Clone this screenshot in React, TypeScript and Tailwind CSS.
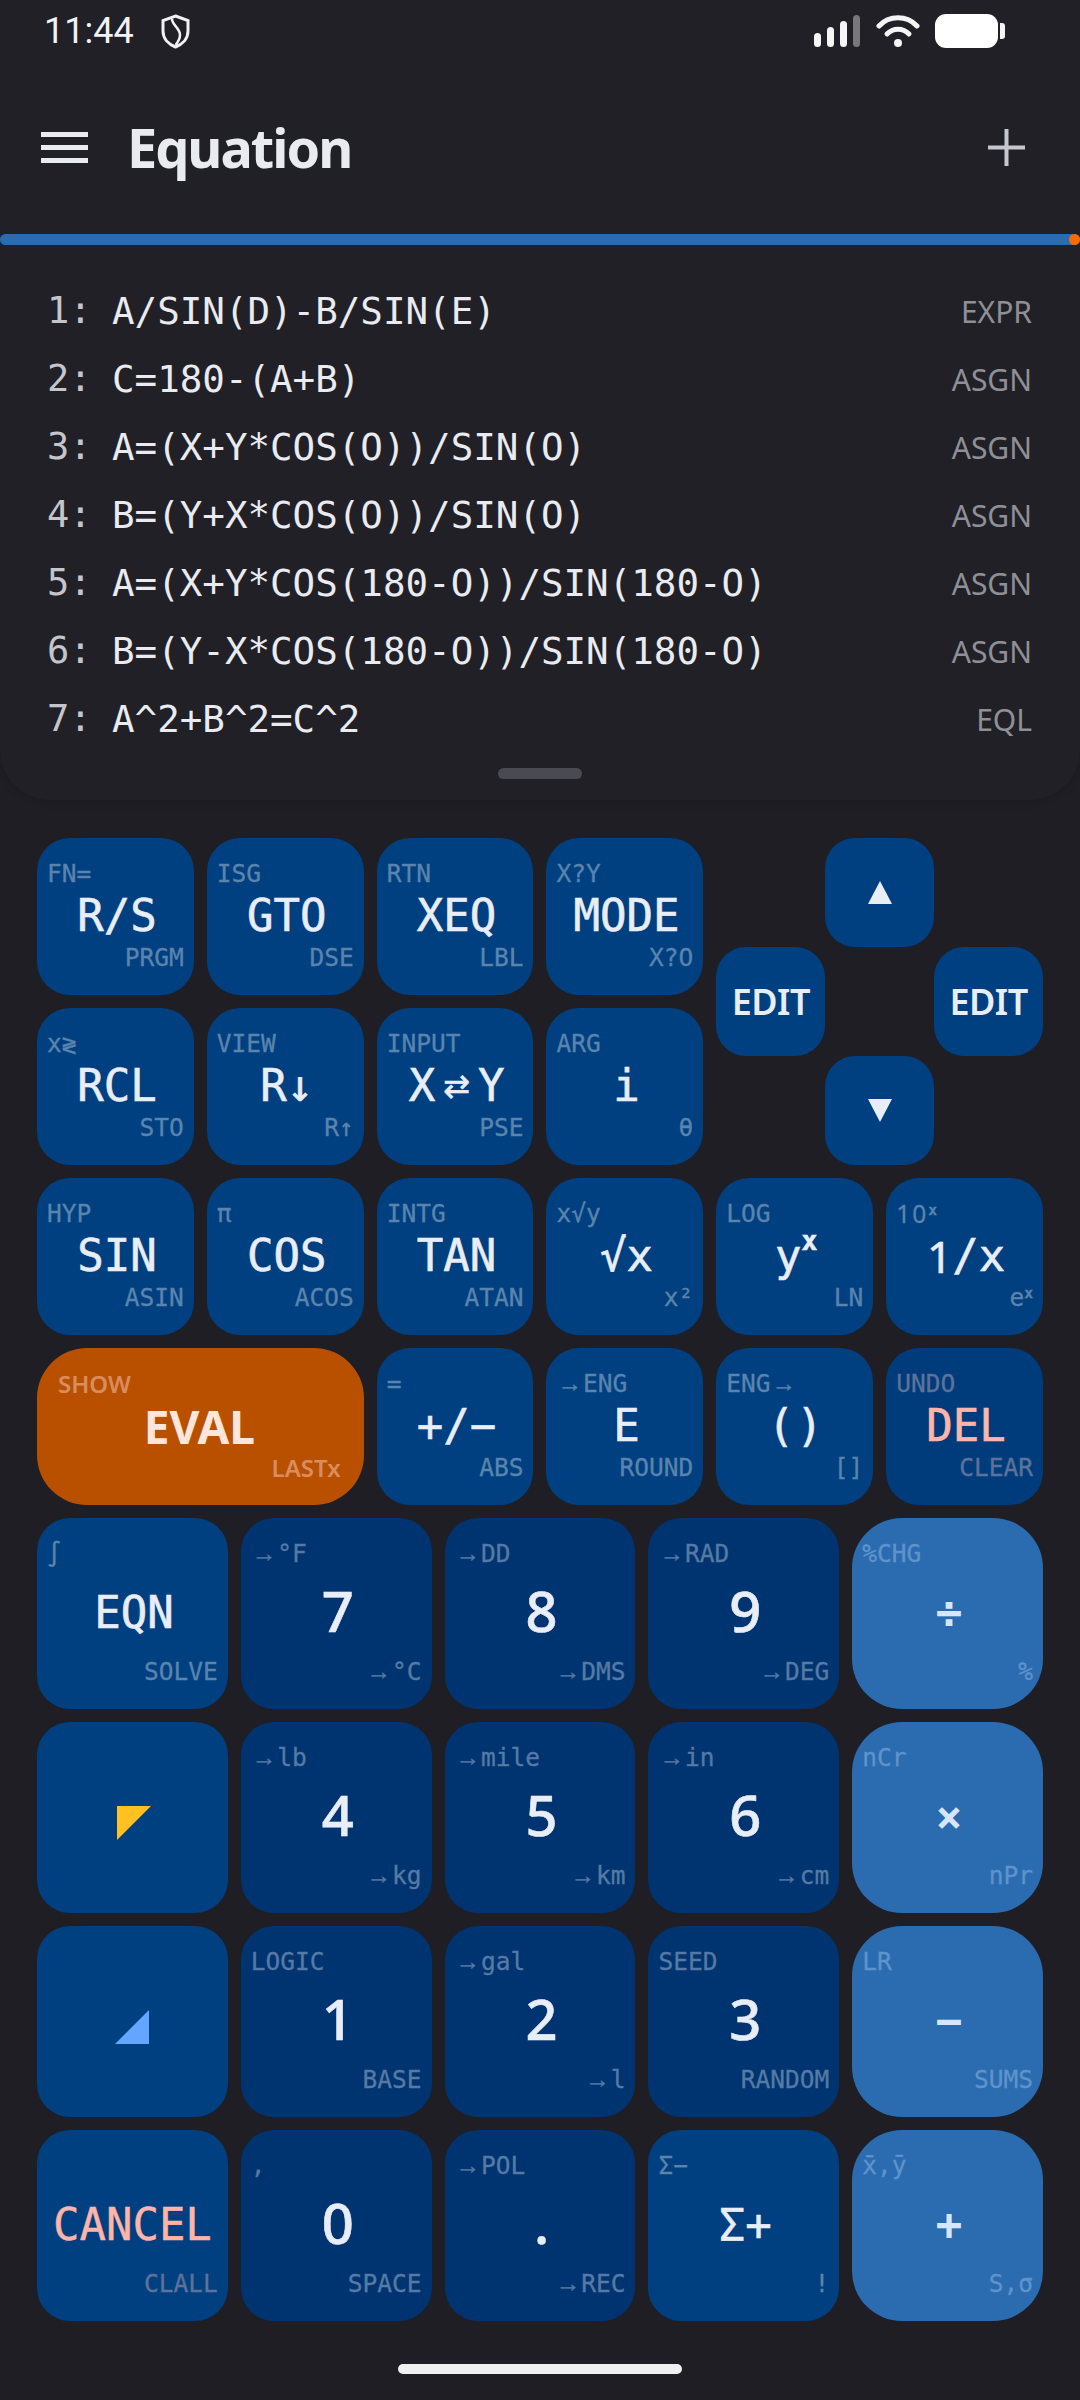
import React from 'react'

type KeyKind = 'fn' | 'num' | 'op' | 'del' | 'cancel'

type KeyDef = {
  top?: React.ReactNode
  main?: React.ReactNode
  bottom?: React.ReactNode
  kind?: KeyKind
  digit?: boolean
}

const mono = "font-['DejaVu_Sans_Mono',monospace]"
const sans = "font-['Noto_Sans',sans-serif]"

const keyBg: Record<KeyKind, string> = {
  fn: 'bg-[#004080] rounded-[33px]',
  num: 'bg-[#003470] rounded-[33px]',
  op: 'bg-[#2b6bb0] rounded-[50px]',
  del: 'bg-[#003c7c] rounded-[33px]',
  cancel: 'bg-[#004080] rounded-[33px]',
}

const labelColor: Record<KeyKind, string> = {
  fn: 'text-[#5a84ae]',
  num: 'text-[#557aa5]',
  op: 'text-[#5f93cc]',
  del: 'text-[#5e7299]',
  cancel: 'text-[#5e7299]',
}

const mainColor: Record<KeyKind, string> = {
  fn: 'text-[#e9edf5] pl-[3px] [-webkit-text-stroke:0.6px]',
  num: 'text-[#e9edf5] pl-[3px] [-webkit-text-stroke:0.6px]',
  op: 'text-[#d6e6ff] pl-[3px] font-bold',
  del: 'text-[#ffb4a9] pl-[3px] [-webkit-text-stroke:0.6px]',
  cancel: 'text-[#ffb4a9] [-webkit-text-stroke:0.4px]',
}

// arrows in the small labels come out wider and thinner than the mono cell
const Arrow = () => <span className="font-['Liberation_Sans',sans-serif] mx-[1px]">→</span>

const Sup: React.FC<{ children: React.ReactNode }> = ({ children }) => (
  <span className="text-[0.6em] font-bold relative -top-[0.55em]">{children}</span>
)

const Key: React.FC<KeyDef> = ({ top, main, bottom, kind = 'fn', digit }) => (
  <div className={`flex flex-col pt-[22px] pb-[23px] px-[10px] ${mono} ${keyBg[kind]}`}>
    <div className={`h-[28px] text-[24.5px] leading-[28px] whitespace-pre [-webkit-text-stroke:0.3px] ${labelColor[kind]}`}>{top}</div>
    <div
      className={`flex-1 min-h-0 flex items-center justify-center whitespace-pre leading-none ${mainColor[kind]} ${
        digit ? `${sans} text-[56px] font-medium pb-[6px]` : 'text-[44px]'
      }`}
    >
      {main}
    </div>
    <div className={`h-[28px] text-[24.5px] leading-[28px] text-right whitespace-pre [-webkit-text-stroke:0.3px] ${labelColor[kind]}`}>{bottom}</div>
  </div>
)

const Tri: React.FC<{ points: string; fill: string; className?: string }> = ({ points, fill, className }) => (
  <svg className={className} width="34" height="34" viewBox="0 0 34 34">
    <polygon points={points} fill={fill} />
  </svg>
)

const DpadKey: React.FC<{ className?: string; children: React.ReactNode }> = ({ className, children }) => (
  <div className={`flex items-center justify-center bg-[#004080] rounded-[30px] ${className ?? ''}`}>{children}</div>
)

const equations = [
  ['1', 'A/SIN(D)-B/SIN(E)', 'EXPR'],
  ['2', 'C=180-(A+B)', 'ASGN'],
  ['3', 'A=(X+Y*COS(O))/SIN(O)', 'ASGN'],
  ['4', 'B=(Y+X*COS(O))/SIN(O)', 'ASGN'],
  ['5', 'A=(X+Y*COS(180-O))/SIN(180-O)', 'ASGN'],
  ['6', 'B=(Y-X*COS(180-O))/SIN(180-O)', 'ASGN'],
  ['7', 'A^2+B^2=C^2', 'EQL'],
]

const topKeys: KeyDef[] = [
  { top: 'FN=', main: 'R/S', bottom: 'PRGM' },
  { top: 'ISG', main: 'GTO', bottom: 'DSE' },
  { top: 'RTN', main: 'XEQ', bottom: 'LBL' },
  { top: 'X?Y', main: 'MODE', bottom: 'X?O' },
  { top: 'x≷', main: 'RCL', bottom: 'STO' },
  { top: 'VIEW', main: 'R↓', bottom: 'R↑' },
  {
    top: 'INPUT',
    main: (
      <>
        X<span className="font-['DejaVu_Sans',sans-serif] text-[32px] mx-[8px]">⇄</span>Y
      </>
    ),
    bottom: 'PSE',
  },
  { top: 'ARG', main: 'i', bottom: 'θ' },
]

const sciKeys: KeyDef[] = [
  { top: 'HYP', main: 'SIN', bottom: 'ASIN' },
  { top: 'π', main: 'COS', bottom: 'ACOS' },
  { top: 'INTG', main: 'TAN', bottom: 'ATAN' },
  { top: 'x√y', main: '√x', bottom: 'x²' },
  {
    top: 'LOG',
    main: (
      <>
        y<Sup>x</Sup>
      </>
    ),
    bottom: 'LN',
  },
  {
    top: (
      <>
        <span className={`${sans} tracking-[2px]`}>10</span>
        <Sup>x</Sup>
      </>
    ),
    main: (
      <>
        <span className={sans}>1</span>/x
      </>
    ),
    bottom: (
      <>
        e<Sup>x</Sup>
      </>
    ),
  },
]

const editKeys: KeyDef[] = [
  { top: '=', main: '+/−', bottom: 'ABS' },
  {
    top: (
      <>
        <Arrow />
        ENG
      </>
    ),
    main: 'E',
    bottom: 'ROUND',
  },
  {
    top: (
      <>
        ENG
        <Arrow />
      </>
    ),
    main: <span className="tracking-[2px]">()</span>,
    bottom: '[]',
  },
  { top: 'UNDO', main: 'DEL', bottom: 'CLEAR', kind: 'del' },
]

const arrow = (text: string) => (
  <>
    <Arrow />
    {text}
  </>
)

const numKeys: KeyDef[] = [
  { top: '∫', main: 'EQN', bottom: 'SOLVE' },
  { top: arrow('°F'), main: '7', bottom: arrow('°C'), kind: 'num', digit: true },
  { top: arrow('DD'), main: '8', bottom: arrow('DMS'), kind: 'num', digit: true },
  { top: arrow('RAD'), main: '9', bottom: arrow('DEG'), kind: 'num', digit: true },
  { top: '%CHG', main: '÷', bottom: '%', kind: 'op' },
  { main: <Tri className="mt-[12px]" points="0,0 34,0 0,34" fill="#ffc022" /> },
  { top: arrow('lb'), main: '4', bottom: arrow('kg'), kind: 'num', digit: true },
  { top: arrow('mile'), main: '5', bottom: arrow('km'), kind: 'num', digit: true },
  { top: arrow('in'), main: '6', bottom: arrow('cm'), kind: 'num', digit: true },
  { top: 'nCr', main: '×', bottom: 'nPr', kind: 'op' },
  { main: <Tri className="mt-[12px] mr-[3px]" points="34,0 34,34 0,34" fill="#64a5ff" /> },
  { top: 'LOGIC', main: '1', bottom: 'BASE', kind: 'num', digit: true },
  { top: arrow('gal'), main: '2', bottom: arrow('l'), kind: 'num', digit: true },
  { top: 'SEED', main: '3', bottom: 'RANDOM', kind: 'num', digit: true },
  { top: 'LR', main: '−', bottom: 'SUMS', kind: 'op' },
  { main: 'CANCEL', bottom: 'CLALL', kind: 'cancel' },
  { top: ',', main: '0', bottom: 'SPACE', kind: 'num', digit: true },
  { top: arrow('POL'), main: '.', bottom: arrow('REC'), kind: 'num', digit: true },
  { top: 'Σ−', main: 'Σ+', bottom: '!' },
  { top: 'x̄,ȳ', main: '+', bottom: 'S,σ', kind: 'op' },
]

const StatusBar = () => (
  <div className="h-[62px] pl-[44px] pr-[75px] flex items-center">
    <span className="font-['Roboto',sans-serif] text-[36px] text-[#f2f2f4]">11:44</span>
    <svg className="ml-[27px]" width="29" height="35" viewBox="0 0 29 35" fill="none" stroke="#f2f2f4" strokeWidth="3">
      <path d="M14.5 2 L27 6.5 V17 C27 25 21 30.5 14.5 33 C8 30.5 2 25 2 17 V6.5 Z" />
      <path d="M11 5 C11 11 19 14 19 21 C19 25 17 28 14.5 31" strokeWidth="2.5" />
    </svg>
    <div className="flex-1" />
    <div className="flex items-end gap-[6px] h-[32px]">
      <div className="w-[7px] h-[14px] rounded-full bg-[#f5f5f5]" />
      <div className="w-[7px] h-[20px] rounded-full bg-[#f5f5f5]" />
      <div className="w-[7px] h-[26px] rounded-full bg-[#f5f5f5]" />
      <div className="w-[7px] h-[32px] rounded-full bg-[#77777c]" />
    </div>
    <svg className="ml-[16px]" width="44" height="32" viewBox="0 0 44 32" fill="none" stroke="#f5f5f5" strokeWidth="5" strokeLinecap="round">
      <path d="M3 11 C13 0 31 0 41 11" />
      <path d="M11 19 C17 12.500 27 12.500 33 19" />
      <circle cx="22" cy="28" r="4" fill="#f5f5f5" stroke="none" />
    </svg>
    <div className="ml-[15px] w-[63px] h-[34px] rounded-[11px] bg-white" />
    <div className="ml-[2px] w-[5px] h-[16px] rounded-r-[3px] bg-[#f5f5f5]" />
  </div>
)

const Header = () => (
  <div className="h-[170px] pl-[41px] pr-[55px] flex items-center">
    <div className="w-[47px] flex flex-col gap-[8px]">
      <div className="h-[5px] bg-[#e9ebf0]" />
      <div className="h-[5px] bg-[#e9ebf0]" />
      <div className="h-[5px] bg-[#e9ebf0]" />
    </div>
    <div className="ml-[39px] font-['Noto_Sans',sans-serif] font-bold text-[54px] tracking-[-2px] text-[#e9ebf0]">Equation</div>
    <div className="flex-1" />
    <svg width="37" height="37" viewBox="0 0 37 37" fill="#c4c6d0">
      <rect x="16.500" y="0" width="4" height="37" />
      <rect x="0" y="16.500" width="37" height="4" />
    </svg>
  </div>
)

const App: React.FC = () => {
  return (
    <div className="w-[1080px] h-[2400px] bg-[#1e1e24] flex flex-col overflow-hidden">
      <div className="h-[800px] bg-[#202026] rounded-b-[50px] shadow-[0_2px_8px_rgba(0,0,0,0.12)] flex flex-col">
        <StatusBar />
        <Header />
        <div className="h-[11px] mt-[2px] rounded-full bg-[#2b6bb0] flex justify-end">
          <div className="w-[11px] h-[11px] rounded-full bg-[#ff6a00]" />
        </div>
        <div className="mt-[32px] pl-[47px] pr-[48px]">
          {equations.map(([num, expr, tag]) => (
            <div key={num} className="h-[68px] flex items-center">
              <span className={`${mono} w-[65px] text-[37px] whitespace-pre text-[#c4c6cc]`}>{num}:</span>
              <span className={`${mono} text-[37.5px] whitespace-pre text-[#e9ebf0]`}>{expr}</span>
              <span className="ml-auto font-['Noto_Sans',sans-serif] text-[30px] text-[#8f9097]">{tag}</span>
            </div>
          ))}
        </div>
        <div className="mt-[15px] mx-auto w-[84px] h-[11px] rounded-full bg-[#4a4b52]" />
      </div>

      <div className="mt-[38px] px-[37px] flex flex-col gap-[13px]">
        <div className="grid grid-cols-6 auto-rows-[157px] gap-[13px]">
          {topKeys.slice(0, 4).map((k, i) => (
            <Key key={i} {...k} />
          ))}
          <div className="col-span-2 row-span-2 grid grid-cols-3 grid-rows-3">
            <div />
            <DpadKey>
              <svg width="24" height="23" viewBox="0 0 24 23">
                <polygon points="12,0 24,23 0,23" fill="#e9edf5" />
              </svg>
            </DpadKey>
            <div />
            <DpadKey className="font-['Noto_Sans',sans-serif] font-semibold text-[36px] tracking-[-0.5px] text-[#e9edf5]">EDIT</DpadKey>
            <div />
            <DpadKey className="font-['Noto_Sans',sans-serif] font-semibold text-[36px] tracking-[-0.5px] text-[#e9edf5]">EDIT</DpadKey>
            <div />
            <DpadKey>
              <svg width="24" height="23" viewBox="0 0 24 23">
                <polygon points="0,0 24,0 12,23" fill="#e9edf5" />
              </svg>
            </DpadKey>
            <div />
          </div>
          {topKeys.slice(4).map((k, i) => (
            <Key key={i} {...k} />
          ))}
          {sciKeys.map((k, i) => (
            <Key key={i} {...k} />
          ))}
          <div className="col-span-2 flex flex-col pt-[22px] pb-[23px] pl-[21px] pr-[23px] bg-[#b85000] rounded-[50px] font-['Noto_Sans',sans-serif] font-semibold">
            <div className="h-[28px] text-[24px] leading-[28px] text-[#d98d5e]">SHOW</div>
            <div className="flex-1 min-h-0 flex items-center justify-center leading-none font-bold text-[46px] text-[#ffe6dc]">EVAL</div>
            <div className="h-[28px] text-[24px] leading-[28px] text-right text-[#d98d5e]">LASTx</div>
          </div>
          {editKeys.map((k, i) => (
            <Key key={i} {...k} />
          ))}
        </div>

        <div className="grid grid-cols-5 auto-rows-[191px] gap-[13px]">
          {numKeys.map((k, i) => (
            <Key key={i} {...k} />
          ))}
        </div>
      </div>

      <div className="mt-[43px] mx-auto w-[284px] h-[10px] rounded-full bg-[#f0f0f0]" />
    </div>
  )
}

export default App
